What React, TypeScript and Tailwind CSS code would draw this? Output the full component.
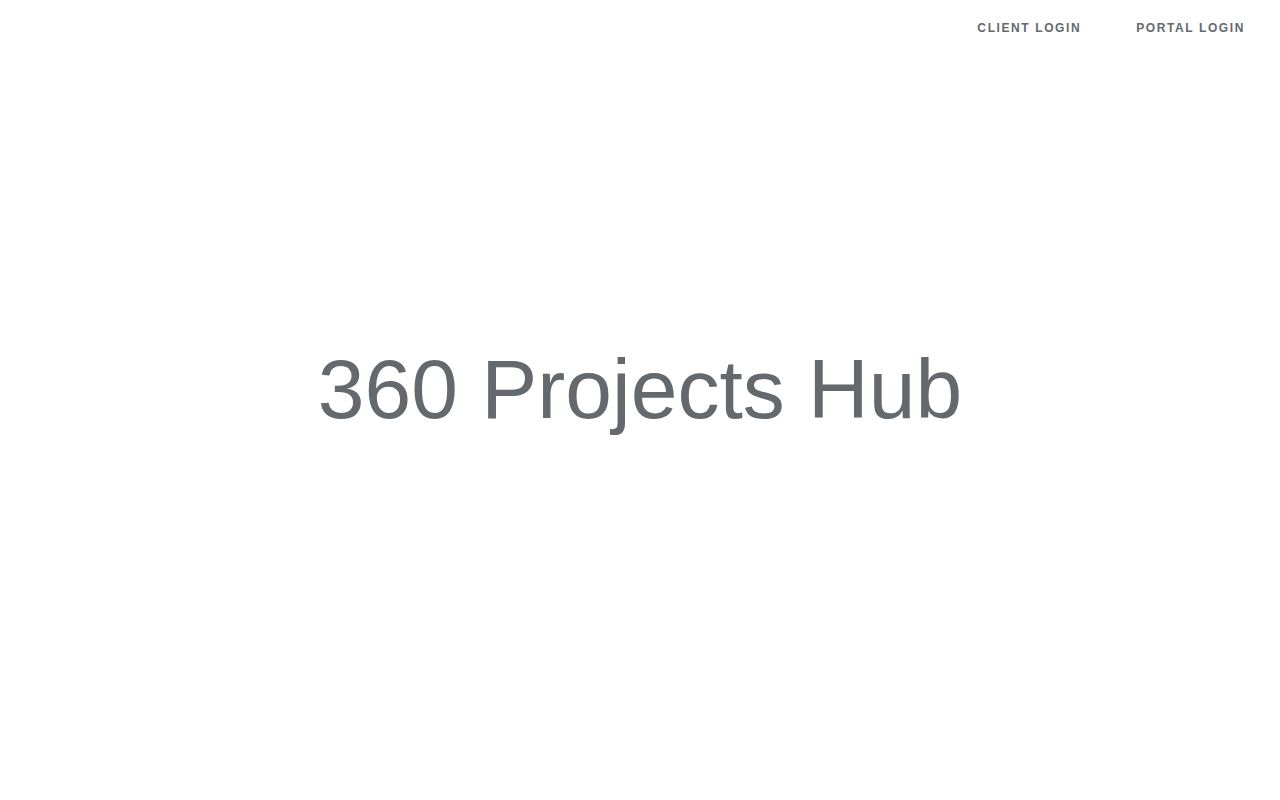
export default function App() {
  return (
    <div className="flex h-[800px] w-full flex-col bg-white font-['Liberation_Sans',Arial,sans-serif] text-[#63696d]">
      <nav className="flex justify-end gap-[55px] pr-[35px] pt-[21px]">
        <a href="#" className="text-[12px] font-bold uppercase leading-[14px] tracking-[1.6px]">
          Client Login
        </a>
        <a href="#" className="text-[12px] font-bold uppercase leading-[14px] tracking-[1.6px]">
          Portal Login
        </a>
      </nav>
      <main className="flex flex-1 items-center justify-center pb-[58px]">
        <h1 className="text-[84px] leading-none font-normal">360 Projects Hub</h1>
      </main>
    </div>
  );
}
